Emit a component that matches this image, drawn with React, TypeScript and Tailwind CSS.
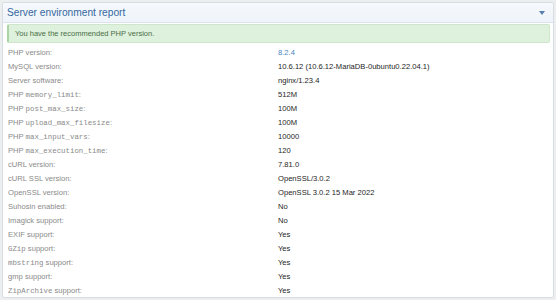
import React from "react";

const M = ({ children }: { children: React.ReactNode }) => (
  <span style={{ fontFamily: '"Liberation Mono", monospace' }} className="text-[7.4px]">{children}</span>
);

const rows: [React.ReactNode, React.ReactNode][] = [
  ["PHP version:", <span className="text-[#4a85c0]">8.2.4</span>],
  ["MySQL version:", "10.6.12 (10.6.12-MariaDB-0ubuntu0.22.04.1)"],
  ["Server software:", "nginx/1.23.4"],
  [<>PHP <M>memory_limit</M>:</>, "512M"],
  [<>PHP <M>post_max_size</M>:</>, "100M"],
  [<>PHP <M>upload_max_filesize</M>:</>, "100M"],
  [<>PHP <M>max_input_vars</M>:</>, "10000"],
  [<>PHP <M>max_execution_time</M>:</>, "120"],
  ["cURL version:", "7.81.0"],
  ["cURL SSL version:", "OpenSSL/3.0.2"],
  ["OpenSSL version:", "OpenSSL 3.0.2 15 Mar 2022"],
  ["Suhosin enabled:", "No"],
  ["Imagick support:", "No"],
  ["EXIF support:", "Yes"],
  [<><M>GZip</M> support:</>, "Yes"],
  [<><M>mbstring</M> support:</>, "Yes"],
  ["gmp support:", "Yes"],
  [<><M>ZipArchive</M> support:</>, "Yes"],
];

export default function App() {
  return (
    <div className="w-[556px] h-[300px] bg-[#eceeef] pt-[2px] pl-[2px] pr-[2px]" style={{ fontFamily: '"Liberation Sans", Arial, sans-serif' }}>
      <div className="bg-white border border-[#d8dde2] rounded-[2px] h-[296px] overflow-hidden">
        <div className="h-[20px] flex items-center justify-between pl-[4px] pr-[8px] bg-gradient-to-b from-[#f6f9fd] to-[#eef4fa] border-b border-[#dbe3ec]">
          <span className="text-[10.2px] text-[#3468a0]">Server environment report</span>
          <svg width="6" height="4" viewBox="0 0 6 4"><path d="M0 0h6L3 4z" fill="#5580ad" /></svg>
        </div>
        <div className="pl-[4px] pr-[3px] pt-[1px]">
          <div className="h-[19px] flex items-center bg-[#def1dc] border border-[#cfe6cc] border-l-[2px] border-l-[#a9d4a5] rounded-[2px] pl-[6px] text-[7.5px] text-[#4a6e47]">
            You have the recommended PHP version.
          </div>
          <div className="mt-[3px]">
            {rows.map(([l, v], i) => (
              <div key={i} className="h-[14px] flex items-center text-[7.6px] leading-none">
                <div className="w-[271px] pl-[1px] text-[#8a8a8a]">{l}</div>
                <div className="text-[#1e1e1e]">{v}</div>
              </div>
            ))}
          </div>
        </div>
      </div>
    </div>
  );
}
